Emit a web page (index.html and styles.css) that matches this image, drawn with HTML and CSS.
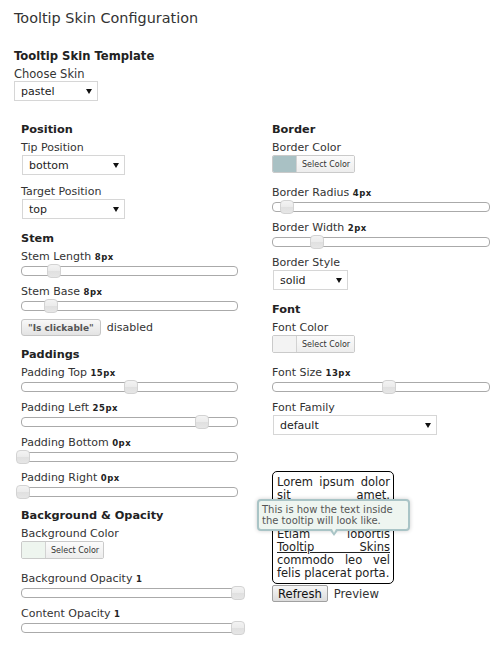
FILE: index.html
```html
<!DOCTYPE html>
<html>
<head>
<meta charset="utf-8">
<title>Tooltip Skin Configuration</title>
<link rel="stylesheet" href="styles.css">
</head>
<body>
<h1 class="title">Tooltip Skin Configuration</h1>

<section class="top">
  <h2 class="heading">Tooltip Skin Template</h2>
  <div class="field">
    <div class="label">Choose Skin</div>
    <div class="select w-skin"><span>pastel</span><i class="arrow"></i></div>
  </div>
</section>

<div class="columns">
  <div class="col">
    <h2 class="heading">Position</h2>
    <div class="field">
      <div class="label">Tip Position</div>
      <div class="select w-pos"><span>bottom</span><i class="arrow"></i></div>
    </div>
    <div class="field">
      <div class="label">Target Position</div>
      <div class="select w-pos"><span>top</span><i class="arrow"></i></div>
    </div>

    <h2 class="heading">Stem</h2>
    <div class="field slide">
      <div class="label">Stem Length <b class="val">8px</b></div>
      <div class="slider"><span class="handle" style="left:14.5%"></span></div>
    </div>
    <div class="field slide">
      <div class="label">Stem Base <b class="val">8px</b></div>
      <div class="slider"><span class="handle" style="left:13%"></span></div>
    </div>
    <div class="toggle">
      <button class="btn-small">"Is clickable"</button>
      <span>disabled</span>
    </div>

    <h2 class="heading">Paddings</h2>
    <div class="field slide">
      <div class="label">Padding Top <b class="val">15px</b></div>
      <div class="slider"><span class="handle" style="left:50%"></span></div>
    </div>
    <div class="field slide">
      <div class="label">Padding Left <b class="val">25px</b></div>
      <div class="slider"><span class="handle" style="left:83.3%"></span></div>
    </div>
    <div class="field slide">
      <div class="label">Padding Bottom <b class="val">0px</b></div>
      <div class="slider"><span class="handle" style="left:0%"></span></div>
    </div>
    <div class="field slide">
      <div class="label">Padding Right <b class="val">0px</b></div>
      <div class="slider"><span class="handle" style="left:0%"></span></div>
    </div>

    <h2 class="heading">Background &amp; Opacity</h2>
    <div class="field color">
      <div class="label">Background Color</div>
      <div class="picker"><span class="swatch sw-bg"></span><span class="picker-btn">Select Color</span></div>
    </div>
    <div class="field slide">
      <div class="label">Background Opacity <b class="val">1</b></div>
      <div class="slider"><span class="handle" style="left:100%"></span></div>
    </div>
    <div class="field slide">
      <div class="label">Content Opacity <b class="val">1</b></div>
      <div class="slider"><span class="handle" style="left:100%"></span></div>
    </div>
  </div>

  <div class="col">
    <h2 class="heading">Border</h2>
    <div class="field color">
      <div class="label">Border Color</div>
      <div class="picker"><span class="swatch sw-border"></span><span class="picker-btn">Select Color</span></div>
    </div>
    <div class="field slide">
      <div class="label">Border Radius <b class="val">4px</b></div>
      <div class="slider"><span class="handle" style="left:6.2%"></span></div>
    </div>
    <div class="field slide">
      <div class="label">Border Width <b class="val">2px</b></div>
      <div class="slider"><span class="handle" style="left:20%"></span></div>
    </div>
    <div class="field">
      <div class="label">Border Style</div>
      <div class="select w-style"><span>solid</span><i class="arrow"></i></div>
    </div>

    <h2 class="heading">Font</h2>
    <div class="field color">
      <div class="label">Font Color</div>
      <div class="picker"><span class="swatch sw-font"></span><span class="picker-btn">Select Color</span></div>
    </div>
    <div class="field slide">
      <div class="label">Font Size <b class="val">13px</b></div>
      <div class="slider"><span class="handle" style="left:53.3%"></span></div>
    </div>
    <div class="field">
      <div class="label">Font Family</div>
      <div class="select w-family"><span>default</span><i class="arrow"></i></div>
    </div>

    <div class="preview">
      <div class="preview-box">Lorem ipsum dolor sit amet. Pellentesque habitant morbi Etiam lobortis <a href="#">Tooltip Skins</a> commodo leo vel felis placerat porta.</div>
      <div class="tooltip">This is how the text inside the tooltip will look like.</div>
      <div class="preview-actions">
        <button class="refresh">Refresh</button>
        <span class="preview-label">Preview</span>
      </div>
    </div>
  </div>
</div>
</body>
</html>
```

FILE: styles.css
```css
* {
  box-sizing: border-box;
}

body {
  margin: 0;
  padding: 8px 14px 0;
  font-family: "DejaVu Sans", Verdana, sans-serif;
  font-size: 11px;
  color: #333;
  background: #fff;
}

.title {
  margin: 0 0 20px;
  font-size: 14.4px;
  font-weight: normal;
  line-height: 20px;
  color: #333;
}

.top {
  display: flex;
  flex-direction: column;
  align-items: flex-start;
}

.heading {
  margin: 3px 0 4px;
  font-size: 11.3px;
  font-weight: bold;
  line-height: 14px;
  color: #222;
}

.top .heading {
  margin-top: 1px;
  font-size: 11.6px;
}

.top .label {
  font-size: 11.5px;
}

.columns {
  display: grid;
  grid-template-columns: 217px 218px;
  column-gap: 34px;
  margin: 9px 0 0 7px;
}

.col {
  display: flex;
  flex-direction: column;
}

.field {
  display: flex;
  flex-direction: column;
  align-items: flex-start;
  margin-bottom: 10px;
}

.field.slide {
  margin-bottom: 9px;
  align-items: stretch;
}

.field.color {
  margin-bottom: 13px;
}

.label {
  line-height: 14px;
  white-space: nowrap;
}

.val {
  font-size: 8.5px;
  font-weight: bold;
  letter-spacing: 0.5px;
  color: #222;
}

/* select boxes */
.select {
  display: flex;
  align-items: center;
  justify-content: space-between;
  height: 20px;
  padding: 0 5px 0 6px;
  border: 1px solid #d6d6d6;
  background: #fff;
  color: #222;
}

.col .select {
  margin-left: 1px;
}

.w-skin { width: 84px; }
.w-pos { width: 103px; }
.w-style { width: 75px; }
.w-family { width: 164px; }

.arrow {
  width: 0;
  height: 0;
  border-left: 3px solid transparent;
  border-right: 3px solid transparent;
  border-top: 5px solid #111;
}

/* sliders */
.slider {
  position: relative;
  height: 10px;
  margin-top: 2px;
  border: 1px solid #aaa;
  border-radius: 4px;
  background: #fff;
}

.handle {
  position: absolute;
  top: -3px;
  width: 14px;
  height: 14px;
  margin-left: -6px;
  border: 1px solid #d3d3d3;
  border-radius: 4px;
  background: linear-gradient(#f3f3f3 0%, #ebebeb 50%, #e0e0e0 51%, #e6e6e6 100%);
}

/* colour pickers */
.picker {
  display: flex;
  height: 18px;
  border: 1px solid #cacaca;
  border-radius: 2px;
  overflow: hidden;
}

.swatch {
  width: 24px;
  border-right: 1px solid #d2d2d2;
}

.sw-bg { background: #eef5ef; }
.sw-border { background: #a9c1c4; }
.sw-font { background: #f3f3f3; }

.picker-btn {
  display: flex;
  align-items: center;
  padding: 0 4px 0 5px;
  font-size: 8px;
  color: #333;
  background: linear-gradient(#fbfbfb, #ededed);
}

/* toggle button */
.toggle {
  display: flex;
  align-items: center;
  gap: 6px;
  margin: -1px 0 9px;
}

.btn-small {
  height: 17px;
  padding: 0 6px;
  font-family: "DejaVu Sans", Verdana, sans-serif;
  font-size: 9px;
  font-weight: bold;
  color: #555;
  border: 1px solid #c5c5c5;
  border-radius: 3px;
  background: linear-gradient(#f8f8f8, #e3e3e3);
}

/* preview */
.preview {
  position: relative;
  margin-top: 26px;
  align-self: flex-start;
}

.preview-box {
  width: 122px;
  padding: 4px 3px 3px 4px;
  border: 1px solid #000;
  border-radius: 5px;
  font-size: 11.5px;
  line-height: 13px;
  text-align: justify;
  color: #222;
}

.preview-box a {
  color: #222;
  text-decoration: underline;
}

.tooltip {
  position: absolute;
  left: -15px;
  top: 28px;
  width: 153px;
  height: 32px;
  padding: 3px;
  border: 2px solid #a9c4c6;
  border-radius: 4px;
  background: #eef5f0;
  color: #555;
  font-size: 10px;
  line-height: 11px;
  box-shadow: 0 0 4px rgba(0, 0, 0, 0.2);
}

.tooltip::before,
.tooltip::after {
  content: "";
  position: absolute;
  left: 50%;
  top: 100%;
  width: 0;
  height: 0;
  border-style: solid;
  border-color: transparent;
}

.tooltip::before {
  margin-left: -5px;
  border-width: 7px 5px 0;
  border-top-color: #a9c4c6;
}

.tooltip::after {
  margin-left: -3px;
  margin-top: -2px;
  border-width: 6px 3px 0;
  border-top-color: #eef5f0;
}

.preview-actions {
  display: flex;
  align-items: center;
  gap: 6px;
  margin-top: 1px;
}

.refresh {
  height: 17px;
  padding: 0 5px;
  font-family: "DejaVu Sans", Verdana, sans-serif;
  font-size: 11.6px;
  color: #111;
  border: 1px solid #a0a0a0;
  border-radius: 2px;
  background: linear-gradient(#f6f6f6, #dcdcdc);
}

.preview-label {
  font-size: 11.6px;
}
```
